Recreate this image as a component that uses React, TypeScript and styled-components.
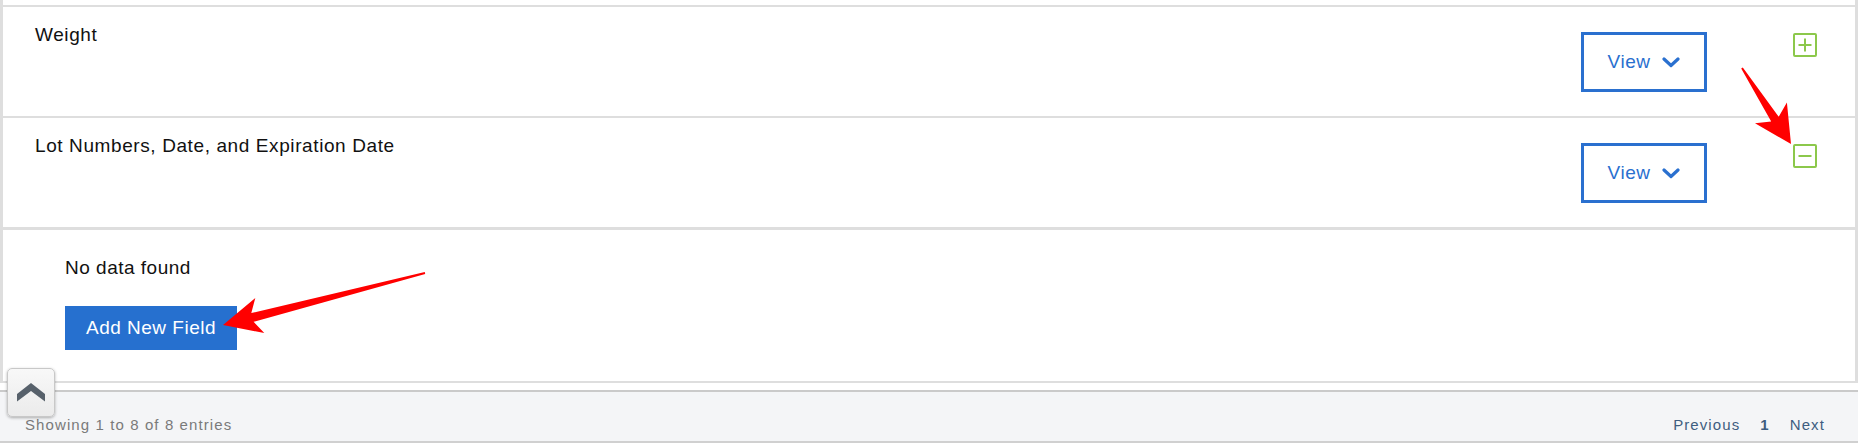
import styled, { createGlobalStyle } from "styled-components";

const GlobalStyle = createGlobalStyle`
  html, body {
    margin: 0;
    padding: 0;
    background: #ffffff;
    font-family: "Liberation Sans", Arial, sans-serif;
  }
`;

const Page = styled.div`
  position: relative;
  width: 1870px;
  height: 445px;
  overflow: hidden;
  background: #ffffff;
`;

const Panel = styled.div`
  width: 1858px;
  box-sizing: border-box;
  border-left: 3px solid #dedede;
  border-right: 3px solid #dedede;
  border-bottom: 2px solid #dedede;
`;

const Stub = styled.div`
  height: 5px;
`;

const Row = styled.div`
  display: flex;
  align-items: flex-start;
  box-sizing: border-box;
  height: 111px;
  padding: 17px 38px 0 32px;
  border-top: 2px solid #dedede;
`;

const Title = styled.div`
  flex: 1;
  font-size: 19px;
  letter-spacing: 0.6px;
  line-height: 22px;
  color: #111111;
`;

const ViewButton = styled.button`
  display: flex;
  align-items: center;
  justify-content: center;
  gap: 12px;
  margin-top: 8px;
  width: 126px;
  height: 60px;
  box-sizing: border-box;
  background: #ffffff;
  border: 3px solid #2a70cf;
  color: #2a70cf;
  font-family: inherit;
  font-size: 19px;
  letter-spacing: 0.5px;
  padding: 0;
`;

const ToggleBox = styled.div`
  margin-top: 9px;
  margin-left: 86px;
  width: 24px;
  height: 24px;
  box-sizing: border-box;
  border: 2px solid #8cc84b;
  border-radius: 2px;
  display: flex;
  align-items: center;
  justify-content: center;
`;

const Expanded = styled.div`
  border-top: 3px solid #dedede;
  padding: 27px 0 31px 62px;
  display: flex;
  flex-direction: column;
  align-items: flex-start;
  gap: 27px;
`;

const EmptyText = styled.div`
  font-size: 19px;
  letter-spacing: 0.5px;
  line-height: 22px;
  color: #111111;
`;

const AddButton = styled.button`
  width: 172px;
  height: 44px;
  background: #2670cf;
  color: #ffffff;
  border: none;
  font-family: inherit;
  font-size: 19px;
  letter-spacing: 0.5px;
  padding: 0;
`;

const Footer = styled.div`
  margin-top: 7px;
  width: 1858px;
  height: 53px;
  box-sizing: border-box;
  background: #f4f5f7;
  border-top: 2px solid #cacaca;
  border-bottom: 2px solid #d0d0d0;
  display: flex;
  align-items: flex-end;
  justify-content: space-between;
  padding: 0 33px 7px 25px;
  font-size: 15px;
  letter-spacing: 1.1px;
  line-height: 18px;
`;

const Info = styled.div`
  color: #7a7a7a;
`;

const Pager = styled.div`
  display: flex;
  gap: 20px;
  color: #3e5d80;
`;

const PageNum = styled.span<{ active?: boolean }>`
  font-weight: ${(p) => (p.active ? 700 : 400)};
`;

const ScrollTop = styled.div`
  position: absolute;
  left: 7px;
  top: 368px;
  width: 48px;
  height: 49px;
  box-sizing: border-box;
  border: 1px solid #c8c8c8;
  border-radius: 5px;
  background: linear-gradient(#f8f8f8, #ebebeb);
  box-shadow: 0 1px 3px rgba(0, 0, 0, 0.3);
  display: flex;
  align-items: center;
  justify-content: center;
`;

const Overlay = styled.svg`
  position: absolute;
  left: 0;
  top: 0;
  pointer-events: none;
`;

type Pt = [number, number];

// skitch-like arrow: thin tail, wide head
function arrowPoints(tail: Pt, tip: Pt, headLen: number, headW: number) {
  const dx = tip[0] - tail[0];
  const dy = tip[1] - tail[1];
  const len = Math.hypot(dx, dy);
  const ux = dx / len;
  const uy = dy / len;
  const nx = -uy;
  const ny = ux;
  const base: Pt = [tip[0] - ux * headLen, tip[1] - uy * headLen];
  const neck: Pt = [tip[0] - ux * headLen * 0.8, tip[1] - uy * headLen * 0.8];
  const tw = 1;
  const sw = 4.5;
  const pts: Pt[] = [
    [tail[0] + nx * tw, tail[1] + ny * tw],
    [neck[0] + nx * sw, neck[1] + ny * sw],
    [base[0] + nx * headW / 2, base[1] + ny * headW / 2],
    tip,
    [base[0] - nx * headW / 2, base[1] - ny * headW / 2],
    [neck[0] - nx * sw, neck[1] - ny * sw],
    [tail[0] - nx * tw, tail[1] - ny * tw],
  ];
  return pts.map((p) => p.map((v) => v.toFixed(1)).join(",")).join(" ");
}

function Chevron() {
  return (
    <svg width="18" height="11" viewBox="0 0 18 11">
      <polyline
        points="2,2 9,8.5 16,2"
        fill="none"
        stroke="#2a70cf"
        strokeWidth="3.2"
        strokeLinecap="round"
        strokeLinejoin="round"
      />
    </svg>
  );
}

function Toggle({ open }: { open: boolean }) {
  return (
    <ToggleBox>
      <svg width="16" height="16" viewBox="0 0 16 16">
        <line x1="1.5" y1="8" x2="14.5" y2="8" stroke="#8cc84b" strokeWidth="2" />
        {!open && <line x1="8" y1="1.5" x2="8" y2="14.5" stroke="#8cc84b" strokeWidth="2" />}
      </svg>
    </ToggleBox>
  );
}

const fields = [
  { id: 1, name: "Weight", open: false },
  { id: 2, name: "Lot Numbers, Date, and Expiration Date", open: true },
];

export default function App() {
  return (
    <Page>
      <GlobalStyle />
      <Panel>
        <Stub />
        {fields.map((f) => (
          <Row key={f.id}>
            <Title>{f.name}</Title>
            <ViewButton>
              View
              <Chevron />
            </ViewButton>
            <Toggle open={f.open} />
          </Row>
        ))}
        <Expanded>
          <EmptyText>No data found</EmptyText>
          <AddButton>Add New Field</AddButton>
        </Expanded>
      </Panel>
      <Footer>
        <Info>Showing 1 to 8 of 8 entries</Info>
        <Pager>
          <PageNum>Previous</PageNum>
          <PageNum active>1</PageNum>
          <PageNum>Next</PageNum>
        </Pager>
      </Footer>
      <ScrollTop>
        <svg width="28" height="19" viewBox="0 0 28 19">
          <polygon points="14,0 28,11 28,18.5 14,8 0,18.5 0,11" fill="#57616b" />
        </svg>
      </ScrollTop>
      <Overlay width="1870" height="445" viewBox="0 0 1870 445">
        <polygon points={arrowPoints([1742, 68], [1791, 144], 37, 38)} fill="#ff0000" />
        <polygon points={arrowPoints([425, 273], [223, 325], 38, 36)} fill="#ff0000" />
      </Overlay>
    </Page>
  );
}
